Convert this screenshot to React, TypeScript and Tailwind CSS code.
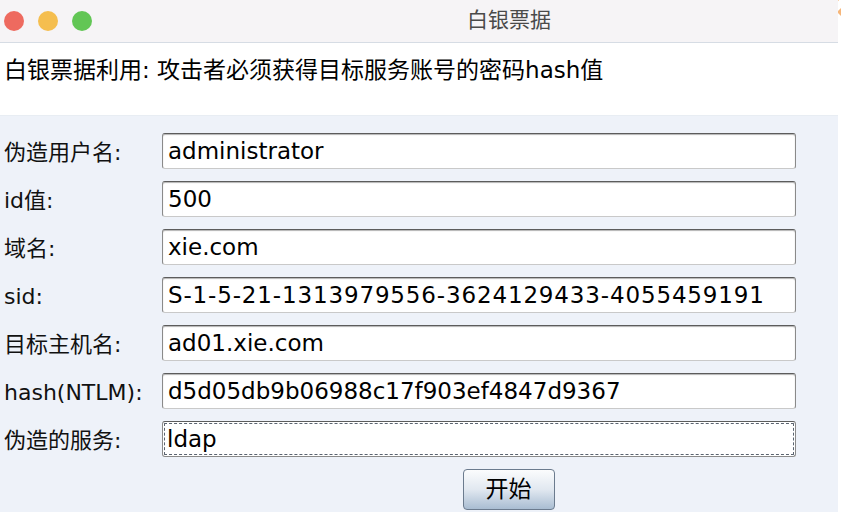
import React from "react";

const fields = [
  { label: "伪造用户名:", value: "administrator" },
  { label: "id值:", value: "500" },
  { label: "域名:", value: "xie.com" },
  { label: "sid:", value: "S-1-5-21-1313979556-3624129433-4055459191", wide: true },
  { label: "目标主机名:", value: "ad01.xie.com" },
  { label: "hash(NTLM):", value: "d5d05db9b06988c17f903ef4847d9367" },
  { label: "伪造的服务:", value: "ldap", focused: true },
];

const font = { fontFamily: '"DejaVu Sans", "Noto Sans CJK SC", sans-serif' };

export default function App() {
  return (
    <div className="relative h-[512px] w-[841px] overflow-hidden bg-white" style={font}>
      {/* little orange marker in the corner */}
      <svg className="absolute right-0 top-0" width="14" height="22" viewBox="0 0 14 22">
        <path d="M4 0 L12 0 L8 5 Z" fill="#f6b67a" />
        <path d="M14 8 L10 12 L14 16 Z" fill="#f6b67a" />
      </svg>

      <div className="flex h-full w-[838px] flex-col">
        {/* Title bar */}
        <div className="relative flex h-[43px] shrink-0 items-center border-b border-[#d6dce4] bg-[#f6f4f6] pl-[4px]">
          <div className="flex gap-[14px]">
            <span className="h-[20px] w-[20px] rounded-full bg-[#ee6a5f]" />
            <span className="h-[20px] w-[20px] rounded-full bg-[#f5be4f]" />
            <span className="h-[20px] w-[20px] rounded-full bg-[#62c655]" />
          </div>
          <div className="absolute left-[467px] top-[5px] text-[21px] text-[#4a4a4a]">白银票据</div>
        </div>

        {/* Description */}
        <div className="h-[73px] shrink-0 border-b border-[#e8edf3] bg-white pl-[4px] pt-[12px] text-[23px] leading-[30px] text-black">
          白银票据利用: 攻击者必须获得目标服务账号的密码hash值
        </div>

        {/* Form */}
        <div className="flex flex-1 flex-col bg-[#eef2f9] pt-[17px]">
          <div className="flex flex-col gap-[12px]">
            {fields.map((f) => (
              <div key={f.label} className="flex h-[36px] items-center">
                <div className="w-[162px] shrink-0 pl-[4px] pt-[2px] text-[22px] text-[#111]">{f.label}</div>
                <div
                  className={
                    f.focused
                      ? "flex h-[36px] w-[634px] items-center rounded-[3px] border border-[#8a8a8a] border-t-[#5c5c5c] bg-white pl-[4px] text-[23px] text-black outline-1 -outline-offset-[3px] outline-dashed outline-[#5b6470]"
                      : "flex h-[36px] w-[634px] items-center rounded-[3px] border border-[#8a8a8a] border-t-[#5c5c5c] border-b-[#c9c9c9] bg-white pl-[5px] text-[23px] text-black shadow-[inset_0_1px_1px_#b4b4b4]"
                  }
                >
                  <span className={f.wide ? "tracking-[0.85px]" : ""}>{f.value}</span>
                </div>
              </div>
            ))}
          </div>
          <div className="flex justify-center pl-[179px] pt-[12px]">
            <button className="flex h-[41px] w-[92px] items-center justify-center rounded-[4px] border border-[#6b7b8e] bg-gradient-to-b from-[#fbfcfd] via-[#e1e8f0] to-[#a9bdd2] text-[23px] text-black">
              开始
            </button>
          </div>
        </div>
      </div>
    </div>
  );
}
